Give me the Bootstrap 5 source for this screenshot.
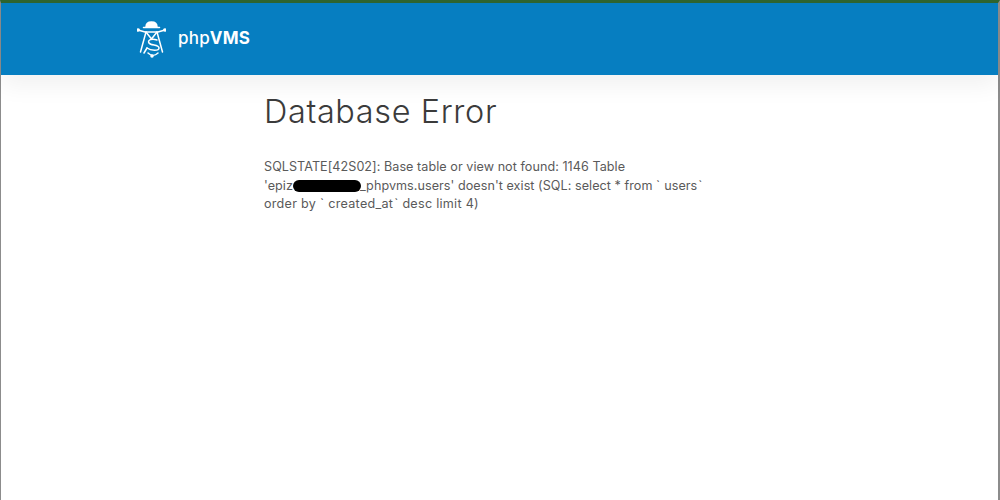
<!DOCTYPE html>
<html lang="en">
<head>
<meta charset="utf-8">
<title>Database Error</title>
<link href="https://cdn.jsdelivr.net/npm/bootstrap@5.3.0/dist/css/bootstrap.min.css" rel="stylesheet">
<style>
html,body{height:100%;overflow:hidden}
body{background:#fff;font-family:Inter,"Liberation Sans",sans-serif;color:#555}
.frame{height:500px;border-left:1px solid #8c8c8c;border-right:2px solid #8c8c8c;border-top:3px solid #2f6530}
.topbar{height:72px;background:#067ec1;padding:0 0 0 136px;box-shadow:0 10px 25px rgba(0,0,0,.06)}
.brandtext{font-size:17px;font-weight:500;color:#fff;margin-left:12px;letter-spacing:.2px}
.brandtext b{font-weight:700}
.pagebody{padding:0 0 0 263px}
.errbox{width:460px}
.errtitle{font-size:32.4px;font-weight:300;color:#3b3b3b;line-height:38px;margin:18px 0 0;letter-spacing:.65px}
.errtext{font-size:12.6px;line-height:18.5px;color:#5a5a5a;margin:27px 0 0;letter-spacing:.05px}
.redact{display:inline-block;width:68px;height:12px;background:#000;border-radius:6px;vertical-align:-2px;margin-right:-1px}
.tickopen{margin-right:4px}
.tickclose{margin-left:1px}
.lastline{letter-spacing:.27px}
</style>
</head>
<body>
<div class="frame">
  <nav class="topbar d-flex align-items-center">
    <svg width="29" height="38" viewBox="0 0 29 38" fill="none" stroke="#fff" stroke-width="1.5" stroke-linecap="round" stroke-linejoin="round">
      <path d="M9 7 C9 3 11 2 14.5 2 C18 2 20 3 20 7 Z" fill="#fff"/>
      <path d="M6.5 7.5 H22.5"/>
      <path d="M1 10 L8 12 H21 L28 10"/>
      <circle cx="1.2" cy="10" r="1" fill="#fff"/><circle cx="27.8" cy="10" r="1" fill="#fff"/>
      <path d="M9 12 L14.5 19 L20 12"/>
      <path d="M9 12 L3.5 32"/>
      <path d="M20 12 L25.5 32"/>
      <path d="M20 20 C15 18 10 20 12 23 C14 26 22 24 22 28 C22 31 14 31 10 28"/>
      <path d="M10 28 L7 33"/>
      <path d="M11 33 C14 36 18 36 21 33"/>
      <circle cx="15" cy="36" r="1" fill="#fff"/>
    </svg>
    <span class="brandtext">php<b>VMS</b></span>
  </nav>
  <main class="pagebody">
    <div class="errbox">
      <h1 class="errtitle">Database Error</h1>
      <p class="errtext">SQLSTATE[42S02]: Base table or view not found: 1146 Table<br>'epiz<span class="redact"></span>_phpvms.users' doesn't exist (SQL: select * from <span class="tickopen">`</span>users<span class="tickclose">`</span><br><span class="lastline">order by <span class="tickopen">`</span>created_at<span class="tickclose">`</span> desc limit 4)</span></p>
    </div>
  </main>
</div>
</body>
</html>
